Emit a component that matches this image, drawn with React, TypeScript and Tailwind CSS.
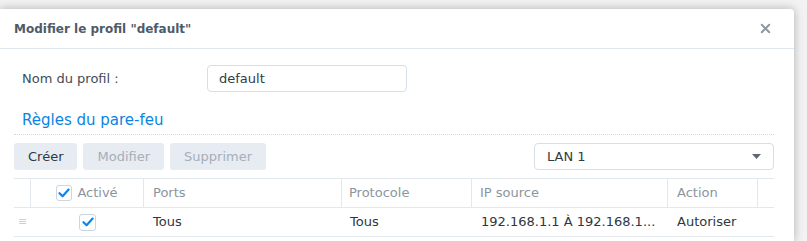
import { X } from 'lucide-react';

const cols = 'grid grid-cols-[17px_113px_198px_130px_196px_90px_16px]';

const Check = ({ className = '' }: { className?: string }) => (
  <span
    className={`flex h-[16px] w-[16px] items-center justify-center rounded-[3px] border border-[#cdd5de] bg-white ${className}`}
  >
    <svg width="12" height="10" viewBox="0 0 12 10" fill="none">
      <path d="M1.5 5.2 4.6 8.2 10.6 1.6" stroke="#0b84ed" strokeWidth="2.2" strokeLinecap="round" strokeLinejoin="round" />
    </svg>
  </span>
);

const App = () => {
  return (
    <div className="relative h-[241px] w-[807px] overflow-hidden bg-[#f2f2f2] pt-[9px] font-['DejaVu_Sans',sans-serif] text-[13px]">
      <div className="h-full w-[794px] rounded-tr-[4px] bg-white shadow-[0_0_10px_rgba(0,0,0,0.28)]">
        {/* header */}
        <div className="flex h-[40px] items-center justify-between border-b border-[#dfe7f1] pl-[14px] pr-[21px]">
          <div className="text-[12px] font-bold text-[#4e5b69]">Modifier le profil "default"</div>
          <X size={15} strokeWidth={3.2} className="text-[#8e98a3]" />
        </div>

        <div className="pl-[14px] pr-[20px]">
          {/* profile name */}
          <div className="mt-[16px] flex h-[27px] items-center">
            <div className="w-[193px] pl-[8px] text-[#414c57]">Nom du profil :</div>
            <div className="flex h-[27px] w-[200px] items-center rounded-[4px] border border-[#d6dee7] pl-[11px] text-[#333b44]">
              default
            </div>
          </div>

          {/* section title */}
          <div className="mt-[17px] flex h-[26px] items-center border-b border-dotted border-[#d3d8de] pb-[4px] pl-[8px] text-[15px] text-[#0a84e3]">
            <span className="pt-[2px]">Règles du pare-feu</span>
          </div>

          {/* toolbar */}
          <div className="mt-[8px] flex h-[27px] items-center justify-between">
            <div className="flex gap-[6px]">
              <button className="h-[27px] rounded-[3px] bg-[#e7ecf2] px-[14px] text-[#2f3943]">Créer</button>
              <button className="h-[27px] rounded-[3px] bg-[#e7ecf2] px-[14px] text-[#a6aeb8]">Modifier</button>
              <button className="h-[27px] rounded-[3px] bg-[#e7ecf2] px-[14px] text-[#a6aeb8]">Supprimer</button>
            </div>
            <div className="flex h-[27px] w-[240px] items-center justify-between rounded-[4px] border border-[#d6dee7] pl-[12px] pr-[12px] text-[#333b44]">
              <span>LAN 1</span>
              <svg width="9" height="5" viewBox="0 0 9 5">
                <path d="M0 0h9L4.5 5z" fill="#5e6772" />
              </svg>
            </div>
          </div>

          {/* table */}
          <div className="mt-[8px] w-[760px] border-t border-[#e3e8ee]">
            <div className={`${cols} h-[29px] border-b border-[#e3e8ee] text-[#8b95a0]`}>
              <div className="border-r border-[#e3e8ee]" />
              <div className="flex items-center justify-center gap-[5px] border-r border-[#e3e8ee]">
                <Check />
                <span>Activé</span>
              </div>
              <div className="flex items-center border-r border-[#e3e8ee] pl-[9px]">Ports</div>
              <div className="flex items-center border-r border-[#e3e8ee] pl-[7px]">Protocole</div>
              <div className="flex items-center border-r border-[#e3e8ee] pl-[8px]">IP source</div>
              <div className="flex items-center border-r border-[#e3e8ee] pl-[9px]">Action</div>
              <div />
            </div>
            <div className={`${cols} h-[29px] border-b border-[#e3e8ee] text-[#2f3740]`}>
              <div className="flex items-center justify-center text-[11px] text-[#c9cfd6]">≡</div>
              <div className="flex items-center justify-center">
                <Check className="h-[17px] w-[17px]" />
              </div>
              <div className="flex items-center pl-[9px]">Tous</div>
              <div className="flex items-center pl-[8px]">Tous</div>
              <div className="flex items-center overflow-hidden whitespace-nowrap pl-[9px]">192.168.1.1 À 192.168.1...</div>
              <div className="flex items-center pl-[9px]">Autoriser</div>
              <div />
            </div>
          </div>
        </div>
      </div>
    </div>
  );
};

export default App;
